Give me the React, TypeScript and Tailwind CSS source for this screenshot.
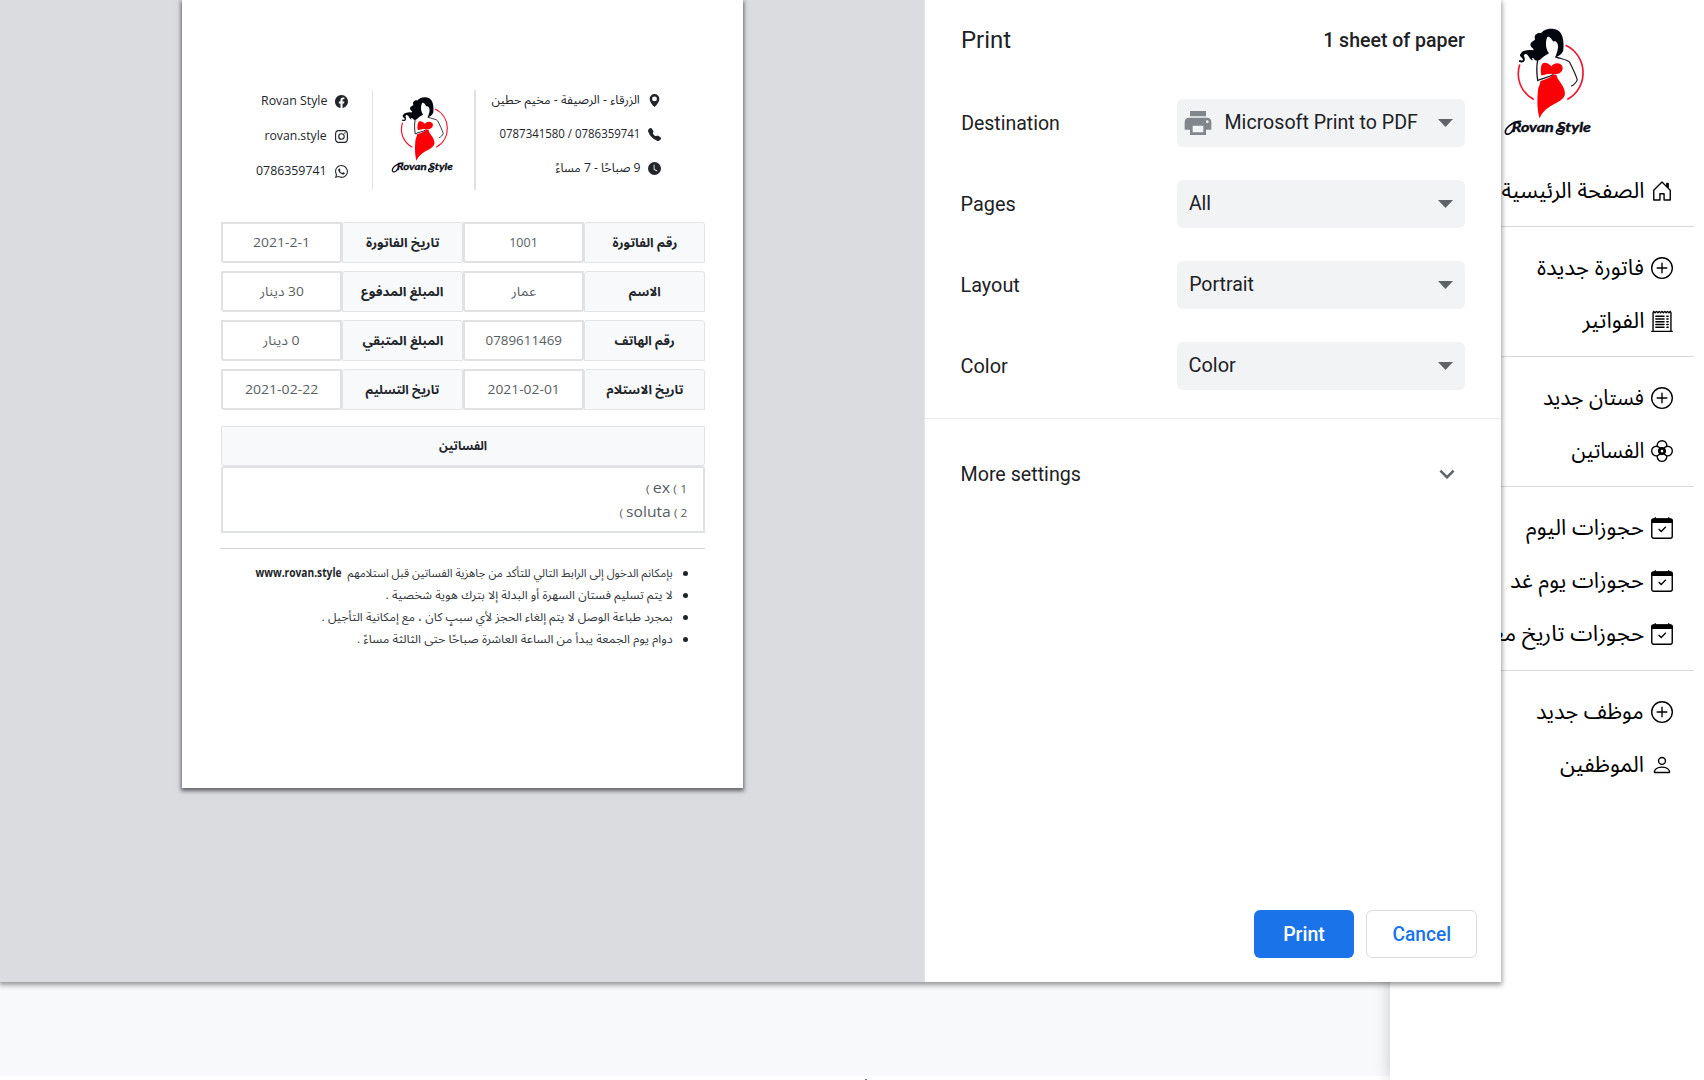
import { useLayoutEffect, useRef, useState } from 'react';
import type { ReactNode } from 'react';
import {
  BsClockFill,
  BsFacebook,
  BsFlower2,
  BsGeoAltFill,
  BsHouseDoor,
  BsInstagram,
  BsPerson,
  BsPlusCircle,
  BsReceiptCutoff,
  BsTelephoneFill,
  BsWhatsapp,
} from 'react-icons/bs';
import { MdPrint, MdExpandMore } from 'react-icons/md';

/** Text condensed or expanded horizontally to an exact width. */
function Fit({ w, className = '', children }: { w: number; className?: string; children: ReactNode }) {
  const ref = useRef<HTMLSpanElement>(null);
  const [scale, setScale] = useState(1);
  useLayoutEffect(() => {
    if (ref.current && ref.current.offsetWidth) setScale(w / ref.current.offsetWidth);
  }, [w]);
  return (
    <span className={`inline-flex shrink-0 justify-center ${className}`} style={{ width: w }}>
      <span ref={ref} className="shrink-0 whitespace-nowrap" style={{ transform: `scaleX(${scale})` }}>
        {children}
      </span>
    </span>
  );
}

function Logo({ className }: { className: string }) {
  return (
    <svg viewBox="36 80 276 340" className={className} direction="ltr">
      <path d="M89 193C76 234 92 277 131 298" fill="none" stroke="#f0142d" strokeWidth="5" />
      <path d="M227 135C294 166 298 262 232 298" fill="none" stroke="#f0142d" strokeWidth="5" />
      <path
        d="M220 150C223 118 218 86 187 85C169 84 158 91 153 99C143 96 130 104 135 116C135 123 121 122 121 134C123 144 132 142 130 150C119 148 96 148 91 162C89 174 102 171 103 178C102 184 94 184 87 182C92 188 102 187 104 179C106 169 96 166 106 161C116 160 117 179 129 180C124 174 125 172 130 174C136 185 148 183 155 174C164 166 171 163 177 159C167 147 165 126 172 110C179 106 184 115 190 124C200 120 205 131 204 142C203 156 198 163 196 172C204 168 217 162 220 150Z"
        fill="#05070f"
      />
      <path d="M87 182C95 185 102 184 101 177C98 168 91 169 92 162" fill="none" stroke="#05070f" strokeWidth="5" />
      <path d="M196 170C216 177 233 178 239 186C247 203 258 224 262 239C259 248 253 253 244 258" fill="none" stroke="#15151d" strokeWidth="3.5" />
      <path d="M143 179C139 199 140 221 143 241C157 234 176 232 190 223" fill="none" stroke="#15151d" strokeWidth="4" />
      <path d="M154 226C151 210 152 195 158 189C166 185 176 189 184 198C192 189 207 184 217 197C222 211 211 221 196 222C180 218 168 222 154 226Z" fill="#fb0007" />
      <path d="M151 243C164 238 181 233 191 222L200 225C201 240 225 256 225 280C224 310 166 310 149 355C141 333 141 296 144 269C145 258 151 253 151 243Z" fill="#fb0007" />
      <path d="M92 364C66 364 43 386 46 398C49 407 63 402 68 390" fill="none" stroke="#0a0a14" strokeWidth="5" strokeLinecap="round" />
      <path d="M216 384C198 386 195 399 205 402C213 404 219 400 221 396" fill="none" stroke="#0a0a14" strokeWidth="5" strokeLinecap="round" />
      <text
        x="65"
        y="396"
        textLength="238"
        lengthAdjust="spacingAndGlyphs"
        fill="#0a0a14"
        stroke="#0a0a14"
        strokeWidth="1.2"
        fontSize="40"
        fontStyle="italic"
        fontWeight="700"
        fontFamily="'Lato', sans-serif"
      >
        Rovan Style
      </text>
    </svg>
  );
}

function CalendarIcon() {
  return (
    <svg viewBox="0 0 22 22" className="size-[22px]">
      <rect x="0.75" y="2.25" width="20.5" height="19" rx="2" fill="none" stroke="black" strokeWidth="1.4" />
      <path d="M0.2 6V3.5C0.2 2 1.2 1.2 2.6 1.2H3.7V0.2H5V1.2H17V0.2H18.3V1.2H19.4C20.8 1.2 21.8 2 21.8 3.5V6Z" fill="black" />
      <path d="M7.6 12L10.2 14.5L14.8 9.8" fill="none" stroke="black" strokeWidth="1.3" />
    </svg>
  );
}

function ContactRow({ w, icon, children }: { w: number; icon: ReactNode; children: ReactNode }) {
  return (
    <div dir="rtl" className="flex h-[14px] items-center gap-2">
      {icon}
      <Fit w={w}>{children}</Fit>
    </div>
  );
}

type Cell = [string, number];
const rows: Cell[][] = [
  [['رقم الفاتورة', 65], ['1001', 29], ['تاريخ الفاتورة', 73], ['2021-2-1', 57]],
  [['الاسم', 31.5], ['عمار', 25], ['المبلغ المدفوع', 82], ['30 دينار', 44]],
  [['رقم الهاتف', 60], ['0789611469', 76], ['المبلغ المتبقي', 81], ['0 دينار', 37]],
  [['تاريخ الاستلام', 77], ['2021-02-01', 72], ['تاريخ التسليم', 74], ['2021-02-22', 73]],
];

const notes: Cell[] = [
  ['بإمكانم الدخول إلى الرابط التالي للتأكد من جاهزية الفساتين قبل استلامهم', 325],
  ['لا يتم تسليم فستان السهرة أو البدلة إلا بترك هوية شخصية .', 287],
  ['بمجرد طباعة الوصل لا يتم إلغاء الحجز لأي سببٍ كان ، مع إمكانية التأجيل .', 351],
  ['دوام يوم الجمعة يبدأ من الساعة العاشرة صباحًا حتى الثالثة مساءً .', 316],
];

function Invoice() {
  return (
    <div
      dir="rtl"
      className="ml-[182px] flex h-[788px] w-[561px] flex-col bg-white pt-[90px] pr-[38px] pl-[38px] text-[12.5px] text-[#3c4043] shadow-[0_2px_4px_1px_rgba(0,0,0,0.55)]"
    >
      <div className="flex h-[100px] text-[#212529]">
        <div className="flex w-[229px] flex-col gap-5 pt-[3px] pr-[44px] text-[12px]">
          <ContactRow w={148} icon={<BsGeoAltFill className="size-[13px]" />}>الزرقاء - الرصيفة - مخيم حطين</ContactRow>
          <ContactRow w={141} icon={<BsTelephoneFill className="size-[13px]" />}>
            <span dir="ltr">0787341580 / 0786359741</span>
          </ContactRow>
          <ContactRow w={85} icon={<BsClockFill className="size-[13px]" />}>9 صباحًا - 7 مساءً</ContactRow>
        </div>
        <div className="flex w-[104px] justify-end border-r-2 border-l border-[#dee2e6] pt-[6px] pl-[17px]">
          <Logo className="h-20 w-[65px]" />
        </div>
        <div className="flex flex-1 flex-col gap-[21px] pt-1 pr-[24px] text-[12px]">
          <ContactRow w={66} icon={<BsFacebook className="size-[13px]" />}>Rovan Style</ContactRow>
          <ContactRow w={62} icon={<BsInstagram className="size-[13px]" />}>rovan.style</ContactRow>
          <ContactRow w={71} icon={<BsWhatsapp className="size-[13px]" />}>0786359741</ContactRow>
        </div>
      </div>

      <div className="mt-8 flex flex-col gap-2 pl-[1px]">
        {rows.map((row) => (
          <div key={row[0][0]} className="grid h-[41px] grid-cols-4">
            {row.map(([label, w], i) => (
              <div
                key={label}
                className={
                  i % 2 === 0
                    ? 'flex items-center justify-center rounded-t-[3px] border border-[#e2e3e5] bg-[#f8f9fb] pt-px font-bold text-[#212529]'
                    : 'flex items-center justify-center rounded-b-[3px] border-2 border-[#e0e1e2] pt-[2px] text-[#585d62]'
                }
              >
                <Fit w={w}>{label}</Fit>
              </div>
            ))}
          </div>
        ))}
      </div>

      <div className="mt-[16px] ml-[1px] flex h-10 items-center justify-center rounded-b-[3px] border border-[#e2e3e5] bg-[#f8f9fb] pt-px font-bold text-[#212529]">
        <Fit w={48}>الفساتين</Fit>
      </div>
      <div className="ml-[1px] flex h-[67px] flex-col items-start rounded-t-[3px] border-2 border-[#e0e1e2] pt-[8px] pr-[16px] text-[14.5px] leading-[23.5px] text-[#585d62]">
        <div dir="ltr" className="h-[23.5px]">
          <Fit w={41}>
            <small className="text-[11px]">( </small>ex<small className="text-[11px]"> ( 1</small>
          </Fit>
        </div>
        <div dir="ltr" className="h-[23.5px]">
          <Fit w={68}>
            <small className="text-[11px]">( </small>soluta<small className="text-[11px]"> ( 2</small>
          </Fit>
        </div>
      </div>
      <div className="mt-[15px] h-px shrink-0 bg-[#d5d6d8]" />

      <ul className="mt-[13px] flex flex-col pr-[17px] text-[11.5px] text-[#33373b]">
        {notes.map(([t, w], i) => (
          <li key={t} className="flex h-[22px] items-center">
            <span className="ml-[10px] size-[5px] rounded-full bg-[#212529]" />
            <Fit w={w}>{t}</Fit>
            {i === 0 && (
              <Fit w={86} className="mr-[6px] font-bold text-[#212529]">
                www.rovan.style
              </Fit>
            )}
          </li>
        ))}
      </ul>
    </div>
  );
}

function Setting({ label, lw, value, vw, icon }: { label: string; lw: number; value: string; vw: number; icon?: ReactNode }) {
  return (
    <div className="flex h-12 items-center justify-between text-[19.5px]">
      <Fit w={lw} className="pt-[2px]">{label}</Fit>
      <div className="flex h-12 w-72 items-center rounded-md bg-[#f1f3f4] pr-3 pl-3">
        {icon}
        <Fit w={vw}>{value}</Fit>
        <svg viewBox="0 0 15 8" className="ml-auto h-2 w-[15px]">
          <path d="M0 0H15L7.5 8Z" fill="#5f6368" />
        </svg>
      </div>
    </div>
  );
}

function PrintDialog() {
  return (
    <div className="relative z-10 flex h-[982px] w-[1501px] bg-white shadow-[0_2px_5px_1px_rgba(0,0,0,0.4)]">
      <div className="h-full w-[925px] overflow-hidden border-r border-[#e6e7ea] bg-[#dadce0]">
        <Invoice />
      </div>
      <div className="flex flex-1 flex-col font-[Roboto,sans-serif] text-[#202124]">
        <div className="flex h-20 items-center justify-between px-9 pt-[2px]">
          <Fit w={50} className="text-[23px]">Print</Fit>
          <Fit w={142} className="text-[19.5px] font-medium">1 sheet of paper</Fit>
        </div>
        <div className="mt-[19px] flex flex-col gap-[33px] px-9">
          <Setting
            label="Destination"
            lw={99}
            value="Microsoft Print to PDF"
            vw={193}
            icon={<MdPrint className="-ml-[7px] mr-[11px] size-8 text-[#80868b]" />}
          />
          <Setting label="Pages" lw={55} value="All" vw={22} />
          <Setting label="Layout" lw={59} value="Portrait" vw={65} />
          <Setting label="Color" lw={47} value="Color" vw={47} />
        </div>
        <div className="mt-7 h-px bg-[#e8eaed]" />
        <div className="mt-[31px] flex h-12 items-center justify-between pr-[39px] pl-9 text-[19.5px]">
          <Fit w={120} className="pt-[2px]">More settings</Fit>
          <MdExpandMore className="size-[30px] text-[#5f6368]" />
        </div>
        <div className="mt-auto mb-6 flex justify-end gap-3 pr-6 text-[19.5px] font-medium">
          <button className="flex h-12 w-[100px] items-center justify-center rounded-md bg-[#1a73e8] pt-[2px] text-white">
            <Fit w={42}>Print</Fit>
          </button>
          <button className="flex h-12 w-[111px] items-center justify-center rounded-md border border-[#dadce0] pt-[2px] text-[#1a73e8]">
            <Fit w={59}>Cancel</Fit>
          </button>
        </div>
      </div>
    </div>
  );
}

function NavItem({ w, icon, children }: { w: number; icon: ReactNode; children: ReactNode }) {
  return (
    <div className="flex h-[53px] items-center gap-[7px] pr-[21px]">
      <span className="flex w-[22px] justify-center">{icon}</span>
      <Fit w={w} className="pb-[3px]">
        {children}
      </Fit>
    </div>
  );
}

const Rule = ({ className = '' }: { className?: string }) => <div className={`h-px shrink-0 bg-[#d9d9d9] ${className}`} />;

function Sidebar() {
  return (
    <aside dir="rtl" className="flex h-[1080px] w-[314px] shrink-0 flex-col bg-white pr-[10px] text-[22px] text-black shadow-[0_0_16px_rgba(0,0,0,0.2)]">
      <Logo className="mt-[27px] mr-[100px] h-[113px] w-[92px] shrink-0" />
      <div className="mt-[24px]">
        <NavItem w={143} icon={<BsHouseDoor />}>الصفحة الرئيسية</NavItem>
      </div>
      <Rule className="mt-[9px]" />
      <div className="mt-[14px]">
        <NavItem w={107} icon={<BsPlusCircle />}>فاتورة جديدة</NavItem>
        <NavItem w={62} icon={<BsReceiptCutoff />}>الفواتير</NavItem>
      </div>
      <Rule className="mt-[9px]" />
      <div className="mt-[14px]">
        <NavItem w={101} icon={<BsPlusCircle />}>فستان جديد</NavItem>
        <NavItem w={73} icon={<BsFlower2 />}>الفساتين</NavItem>
      </div>
      <Rule className="mt-[9px]" />
      <div className="mt-[14px]">
        <NavItem w={118} icon={<CalendarIcon />}>حجوزات اليوم</NavItem>
        <NavItem w={134} icon={<CalendarIcon />}>حجوزات يوم غد</NavItem>
        <NavItem w={177} icon={<CalendarIcon />}>حجوزات تاريخ معين</NavItem>
      </div>
      <Rule className="mt-[10px]" />
      <div className="mt-[14px]">
        <NavItem w={108} icon={<BsPlusCircle />}>موظف جديد</NavItem>
        <NavItem w={84} icon={<BsPerson />}>الموظفين</NavItem>
      </div>
    </aside>
  );
}

export default function App() {
  return (
    <div className="relative h-[1080px] w-[1704px] overflow-hidden bg-white font-['Open_Sans','Noto_Sans_Arabic','DejaVu_Sans',sans-serif]">
      <div className="flex h-[1080px] overflow-hidden">
        <div className="h-[1076px] flex-1 bg-[#f8f9fb]" />
        <Sidebar />
      </div>
      <div className="absolute top-0 left-0">
        <PrintDialog />
      </div>
      <div className="absolute bottom-0 left-[865px] h-px w-0.5 bg-gray-500" />
    </div>
  );
}
